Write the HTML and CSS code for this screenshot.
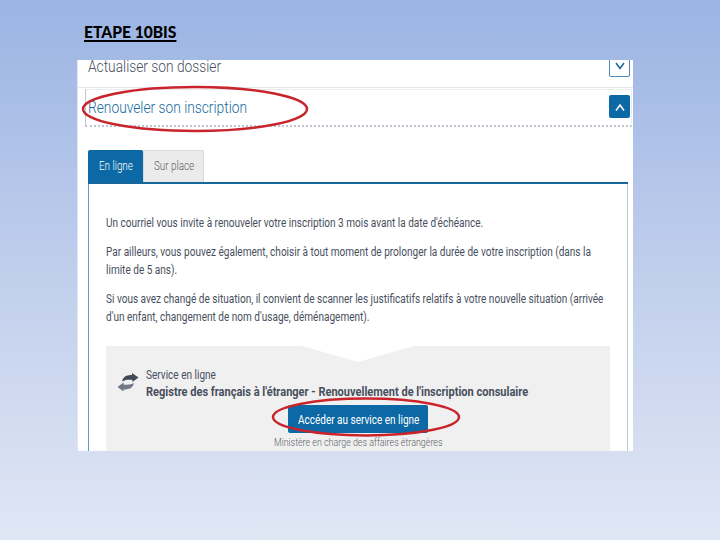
FILE: index.html
```
<!DOCTYPE html>
<html lang="fr">
  <head>
    <meta charset="utf-8" />
    <meta name="viewport" content="width=device-width, initial-scale=1.0" />
    <title>Etape 10bis</title>
    <link rel="stylesheet" href="styles.css">
  </head>
  <body>
    <h1><span>ETAPE 10BIS</span></h1>
    <main>
      <section class="row">
        <h2><span>Actualiser son dossier</span></h2>
        <button class="toggle closed" aria-label="Ouvrir">
          <svg width="10" height="8" viewBox="0 0 10 8"><path d="M1 1 L5 6.500 L9 1" /></svg>
        </button>
      </section>
      <section class="row active">
        <h2><span>Renouveler son inscription</span></h2>
        <button class="toggle" aria-label="Fermer">
          <svg width="10" height="8" viewBox="0 0 10 8"><path d="M1 7.500 L5 2 L9 7.500" /></svg>
        </button>
        <svg class="mark mark-title" width="228" height="48" viewBox="0 0 228 48"><ellipse cx="114" cy="24" rx="112" ry="22" /></svg>
      </section>
      <nav>
        <button class="tab selected"><span>En ligne</span></button>
        <button class="tab"><span>Sur place</span></button>
      </nav>
      <article>
        <p><span>Un courriel vous invite à renouveler votre inscription 3 mois avant la date d'échéance.</span></p>
        <p>
          <span>Par ailleurs, vous pouvez également, choisir à tout moment de prolonger la durée de votre inscription (dans la</span>
          <span>limite de 5 ans).</span>
        </p>
        <p>
          <span>Si vous avez changé de situation, il convient de scanner les justificatifs relatifs à votre nouvelle situation (arrivée</span>
          <span>d'un enfant, changement de nom d'usage, déménagement).</span>
        </p>
        <div class="service">
          <div class="service-head">
            <svg class="arrows" width="22" height="20" viewBox="0 0 22 20">
              <path class="dark" d="M5 8.500 C6 4 9 2 15 2 V0 L21.500 4.500 L15.500 9 V7 C10 6.500 8 7 5 8.500 Z" />
              <path class="light" d="M17 10 C16 14.500 13 16.500 6.500 16.500 V18.500 L0.500 14 L6.500 9.500 V11.500 C12 12 14 11.500 17 10 Z" />
            </svg>
            <div>
              <span>Service en ligne</span>
              <strong>Registre des français à l'étranger - Renouvellement de l'inscription consulaire</strong>
            </div>
          </div>
          <button class="access"><span>Accéder au service en ligne</span></button>
          <small><span>Ministère en charge des affaires étrangères</span></small>
          <svg class="mark mark-access" width="190" height="42" viewBox="0 0 190 42"><ellipse cx="95" cy="21" rx="93" ry="18.500" /></svg>
        </div>
      </article>
    </main>
  </body>
</html>
```

FILE: styles.css
```
* {
  box-sizing: border-box;
}
body {
  margin: 0;
  height: 540px;
  overflow: hidden;
  background: linear-gradient(#9bb4e3, #c0ceec 50%, #e0e7f5);
  font-family: Roboto, "Liberation Sans", sans-serif;
  font-size: 12.5px;
  color: #484f5d;
}
h1,
h2,
p {
  margin: 0;
}
/* Condensed text, one element per line */
span,
strong {
  display: block;
  width: max-content;
  white-space: nowrap;
  transform: scaleX(0.803);
  transform-origin: left;
}
button {
  margin: 0;
  padding: 0;
  border: none;
  font: inherit;
}
h1 {
  height: 60px;
  padding: 22px 0 0 84px;
  font: 900 16px/20px Lato, sans-serif;
  color: #000;
}
h1 span {
  text-decoration: underline;
  text-decoration-thickness: 1.5px;
  text-underline-offset: 2px;
  transform: scaleX(0.975);
}
main {
  width: 556px;
  height: 391px;
  margin-left: 77px;
  overflow: hidden;
  background: #fff;
  border-left: 1px solid #dfe6f5;
}
.row {
  position: relative;
  display: flex;
  justify-content: space-between;
  height: 28px;
  padding: 0 3px 0 10px;
  border-bottom: 1px solid #e4e8ec;
}
h2 {
  font-size: 16px;
  font-weight: 300;
  line-height: 18px;
  margin-top: -2px;
}
h2 span {
  transform: scaleX(0.86);
}
.active {
  height: 38px;
  margin: 1px 1px 0 7px;
  padding: 5px 1px 0 2px;
  border: 1px solid #e9edf0;
  border-left-color: #b8c8d4;
  border-bottom: 2px dotted #bcc5cf;
}
.active h2 {
  margin-top: 4px;
  color: #176b9c;
}
.toggle {
  display: flex;
  align-items: center;
  justify-content: center;
  width: 21px;
  height: 23px;
  background: #0d69a5;
  border-radius: 2px;
}
.closed {
  margin-top: -6px;
  background: #fff;
  border: 1px solid #4888b4;
}
.toggle path {
  fill: none;
  stroke: #fff;
  stroke-width: 1.5;
}
.closed path {
  stroke: #16679b;
}
.mark {
  position: absolute;
  fill: none;
  stroke: #c9242c;
  stroke-width: 2.5;
}
.mark-title {
  left: -5px;
  top: -5px;
}
nav {
  display: flex;
  height: 34px;
  margin: 23px 5px 0 10px;
  border-bottom: 2px solid #16679b;
}
.tab {
  width: 61px;
  padding: 0 0 2px 10px;
  background: #ebebeb;
  border: 1px solid #d8d8d8;
  border-bottom: none;
  border-radius: 2px 2px 0 0;
  color: #5c5f66;
  font-weight: 300;
}
.tab.selected {
  width: 55px;
  background: #0d69a5;
  border-color: #0d69a5;
  color: #fff;
}
.tab span {
  transform: scaleX(0.79);
}
article {
  height: 270px;
  margin: 0 5px 0 10px;
  padding: 30px 17px 0;
  border-left: 1px solid #5ba2bd;
  border-right: 1px solid #b9cdcf;
}
p {
  margin-bottom: 11px;
  line-height: 18px;
}
.service {
  position: relative;
  height: 110px;
  margin-top: 20px;
  padding-top: 20px;
  background: #f0f0f0;
  clip-path: polygon(0 0, 39% 0, 50% 16px, 61% 0, 100% 0, 100% 100%, 0 100%);
}
.service-head {
  display: flex;
  gap: 7px;
  padding-left: 11px;
  line-height: 17px;
}
.arrows {
  margin-top: 7px;
}
.dark {
  fill: #414856;
}
.light {
  fill: #707787;
}
strong {
  font-weight: 700;
  transform: scaleX(0.882);
}
.access {
  display: block;
  width: 140px;
  height: 28px;
  margin: 5px 0 0 182px;
  padding-left: 10px;
  background: #0d69a5;
  border-radius: 2px;
  color: #fff;
  font-size: 13px;
}
.access span {
  transform: scaleX(0.769);
}
small {
  display: block;
  padding: 1px 0 0 168px;
  font-size: 11.5px;
  font-weight: 300;
  line-height: 16px;
  color: #5c5f66;
}
small span {
  transform: scaleX(0.775);
}
.mark-access {
  left: 165px;
  top: 50px;
}
```
